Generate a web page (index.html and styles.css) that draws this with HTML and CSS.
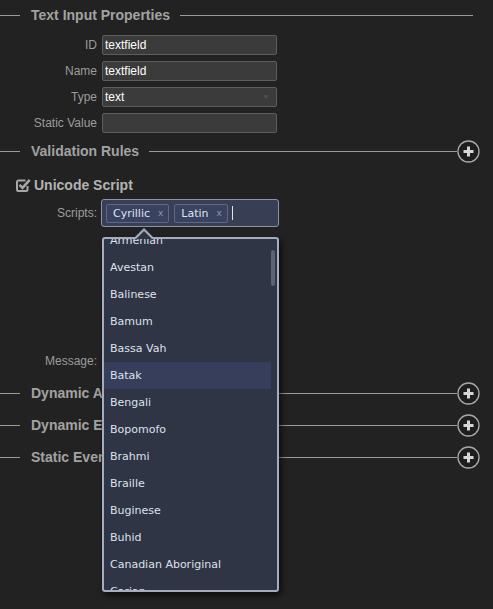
FILE: index.html
```html
<!DOCTYPE html>
<html>
  <head>
    <meta charset="utf-8" />
    <meta name="viewport" content="width=device-width, initial-scale=1" />
    <title>Text Input Properties</title>
    <link rel="stylesheet" href="styles.css">
  </head>
  <body>
    <main class="panel">
      <section class="group">
        <div class="group-head">
          <span class="rule-start"></span>
          <h2>Text Input Properties</h2>
          <span class="rule"></span>
        </div>
        <div class="fields">
          <div class="field">
            <label for="input-id">ID</label>
            <input id="input-id" class="text-input" type="text" value="textfield" />
          </div>
          <div class="field">
            <label for="input-name">Name</label>
            <input id="input-name" class="text-input" type="text" value="textfield" />
          </div>
          <div class="field">
            <label for="input-type">Type</label>
            <div class="select-wrap">
              <select id="input-type" class="text-input">
                <option>text</option>
              </select>
            </div>
          </div>
          <div class="field">
            <label for="input-static">Static Value</label>
            <input id="input-static" class="text-input" type="text" />
          </div>
        </div>
      </section>

      <section class="group">
        <div class="group-head has-add">
          <span class="rule-start"></span>
          <h2>Validation Rules</h2>
          <span class="rule"></span>
          <button class="add-btn" type="button" aria-label="Add rule">
            <svg width="23" height="23" viewBox="0 0 23 23">
              <circle cx="11.5" cy="11.5" r="10.5" fill="#1e1e1e" stroke="#a9a9a9" stroke-width="1.3" />
              <path d="M11.5 6.5v10M6.5 11.5h10" stroke="#d6d6d6" stroke-width="3" />
            </svg>
          </button>
        </div>

        <div class="rule-check">
          <svg class="check-icon" width="15" height="14" viewBox="0 0 15 14">
            <path d="M11.5 8v3.5a1.5 1.5 0 0 1-1.5 1.5H2.5A1.5 1.5 0 0 1 1 11.5V4A1.5 1.5 0 0 1 2.5 2.5h7" fill="none" stroke="#a8a8a8" stroke-width="2" />
            <path d="M3.5 6.8l3 3 7.2-8" fill="none" stroke="#a8a8a8" stroke-width="2.6" />
          </svg>
          <span>Unicode Script</span>
        </div>

        <div class="field field-scripts">
          <label>Scripts:</label>
          <div class="tags">
            <span class="tag">Cyrillic <span class="tag-x">x</span></span>
            <span class="tag">Latin <span class="tag-x">x</span></span>
            <span class="caret"></span>

            <div class="dropdown">
              <div class="dropdown-list">
                <ul>
                  <li>Armenian</li>
                  <li>Avestan</li>
                  <li>Balinese</li>
                  <li>Bamum</li>
                  <li>Bassa Vah</li>
                  <li class="active">Batak</li>
                  <li>Bengali</li>
                  <li>Bopomofo</li>
                  <li>Brahmi</li>
                  <li>Braille</li>
                  <li>Buginese</li>
                  <li>Buhid</li>
                  <li>Canadian Aboriginal</li>
                  <li>Carian</li>
                </ul>
              </div>
              <span class="scroll-thumb"></span>
            </div>
          </div>
        </div>

        <div class="field field-message">
          <label for="input-message">Message:</label>
          <input id="input-message" class="text-input" type="text" />
        </div>
      </section>

      <section class="group collapsed">
        <div class="group-head has-add">
          <span class="rule-start"></span>
          <h2>Dynamic Attributes</h2>
          <span class="rule"></span>
          <button class="add-btn" type="button" aria-label="Add attribute">
            <svg width="23" height="23" viewBox="0 0 23 23">
              <circle cx="11.5" cy="11.5" r="10.5" fill="#1e1e1e" stroke="#a9a9a9" stroke-width="1.3" />
              <path d="M11.5 6.5v10M6.5 11.5h10" stroke="#d6d6d6" stroke-width="3" />
            </svg>
          </button>
        </div>
      </section>

      <section class="group collapsed">
        <div class="group-head has-add">
          <span class="rule-start"></span>
          <h2>Dynamic Events</h2>
          <span class="rule"></span>
          <button class="add-btn" type="button" aria-label="Add dynamic event">
            <svg width="23" height="23" viewBox="0 0 23 23">
              <circle cx="11.5" cy="11.5" r="10.5" fill="#1e1e1e" stroke="#a9a9a9" stroke-width="1.3" />
              <path d="M11.5 6.5v10M6.5 11.5h10" stroke="#d6d6d6" stroke-width="3" />
            </svg>
          </button>
        </div>
      </section>

      <section class="group collapsed">
        <div class="group-head has-add">
          <span class="rule-start"></span>
          <h2>Static Events</h2>
          <span class="rule"></span>
          <button class="add-btn" type="button" aria-label="Add static event">
            <svg width="23" height="23" viewBox="0 0 23 23">
              <circle cx="11.5" cy="11.5" r="10.5" fill="#1e1e1e" stroke="#a9a9a9" stroke-width="1.3" />
              <path d="M11.5 6.5v10M6.5 11.5h10" stroke="#d6d6d6" stroke-width="3" />
            </svg>
          </button>
        </div>
      </section>
    </main>
  </body>
</html>
```

FILE: styles.css
```css
html,
body {
  background: #222222;
}
body {
  margin: 0;
  font-family: "Liberation Sans", Arial, sans-serif;
  font-size: 12px;
  color: #9c9c9c;
}
.panel {
  min-height: 609px;
  box-sizing: border-box;
  padding-top: 5px;
}

/* section headers */
.group-head {
  display: flex;
  align-items: center;
  height: 20px;
  padding-right: 20px;
}
.group-head.has-add {
  padding-right: 13px;
}
.group-head h2 {
  margin: 0 10px 0 11px;
  font-size: 14px;
  font-weight: bold;
  color: #a2a2a2;
  white-space: nowrap;
}
.rule-start {
  width: 20px;
  border-top: 1px solid #9a9a9a;
}
.rule {
  flex: 1;
  border-top: 1px solid #9a9a9a;
}
.add-btn {
  width: 23px;
  height: 23px;
  padding: 0;
  border: 0;
  background: none;
  display: flex;
}
.group.collapsed {
  margin-top: 12px;
}

/* form rows */
.fields {
  display: flex;
  flex-direction: column;
  gap: 6px;
  margin-top: 10px;
  margin-bottom: 8px;
}
.field {
  display: flex;
  align-items: center;
  gap: 5px;
}
.field label {
  width: 97px;
  text-align: right;
  flex: none;
}
.text-input {
  box-sizing: border-box;
  width: 175px;
  height: 20px;
  margin: 0;
  padding: 0 2px;
  background: #3b3b3b;
  border: 1px solid #5d5d5d;
  border-radius: 2px;
  color: #ffffff;
  font-family: "Liberation Sans", Arial, sans-serif;
  font-size: 12px;
  outline: none;
}
select.text-input {
  appearance: none;
  -webkit-appearance: none;
}
.select-wrap {
  position: relative;
  display: flex;
}
.select-wrap::after {
  content: "";
  position: absolute;
  right: 8px;
  top: 8px;
  border-left: 3px solid transparent;
  border-right: 3px solid transparent;
  border-top: 4px solid #4c4c4c;
}

/* validation rule */
.rule-check {
  display: flex;
  align-items: center;
  gap: 3px;
  height: 20px;
  margin: 14px 0 4px 16px;
  font-size: 14px;
  font-weight: bold;
  color: #b3b3b3;
}
.check-icon {
  display: block;
}
.tags {
  position: relative;
  box-sizing: border-box;
  width: 178px;
  height: 28px;
  margin-left: -1px;
  padding: 3px 4px;
  display: flex;
  align-items: center;
  gap: 5px;
  background: #383e53;
  border: 1px solid #8a93a8;
  border-radius: 3px;
}
.tag {
  box-sizing: border-box;
  height: 19px;
  display: flex;
  align-items: center;
  gap: 8px;
  padding: 0 5px 0 6px;
  background: #3a4261;
  border: 1px solid #5f6783;
  border-radius: 2px;
  font-family: "DejaVu Sans", Verdana, sans-serif;
  font-size: 11px;
  color: #dfe3ef;
}
.tag-x {
  font-size: 9px;
  color: #8e95ab;
}
.caret {
  width: 1px;
  height: 14px;
  margin-left: -1px;
  background: #e4e4e4;
}

.field-message {
  margin-top: 124px;
  margin-bottom: 8px;
}

/* open dropdown */
.dropdown {
  position: absolute;
  top: 37px;
  left: 0;
  z-index: 5;
  box-sizing: border-box;
  width: 177px;
  height: 355px;
  background: #2f3545;
  border: 2px solid #a4acbf;
  border-radius: 3px;
  box-shadow: 2px 3px 6px rgba(0, 0, 0, 0.7);
}
.dropdown::before,
.dropdown::after {
  content: "";
  position: absolute;
  left: 31px;
  border-left: 9px solid transparent;
  border-right: 9px solid transparent;
}
.dropdown::before {
  top: -11px;
  border-bottom: 9px solid #a4acbf;
}
.dropdown::after {
  top: -8px;
  left: 32px;
  border-left-width: 8px;
  border-right-width: 8px;
  border-bottom: 8px solid #2f3545;
}
.dropdown-list {
  height: 100%;
  width: 167px;
  overflow: hidden;
}
.dropdown-list ul {
  list-style: none;
  margin: -12px 0 0;
  padding: 0;
}
.dropdown-list li {
  height: 27px;
  line-height: 27px;
  padding-left: 6px;
  font-family: "DejaVu Sans", Verdana, sans-serif;
  font-size: 11px;
  color: #dde1eb;
  white-space: nowrap;
}
.dropdown-list li.active {
  background: #363e5c;
}
.scroll-thumb {
  position: absolute;
  top: 11px;
  right: 2px;
  width: 4px;
  height: 36px;
  border-radius: 2px;
  background: #5d6373;
}
```
